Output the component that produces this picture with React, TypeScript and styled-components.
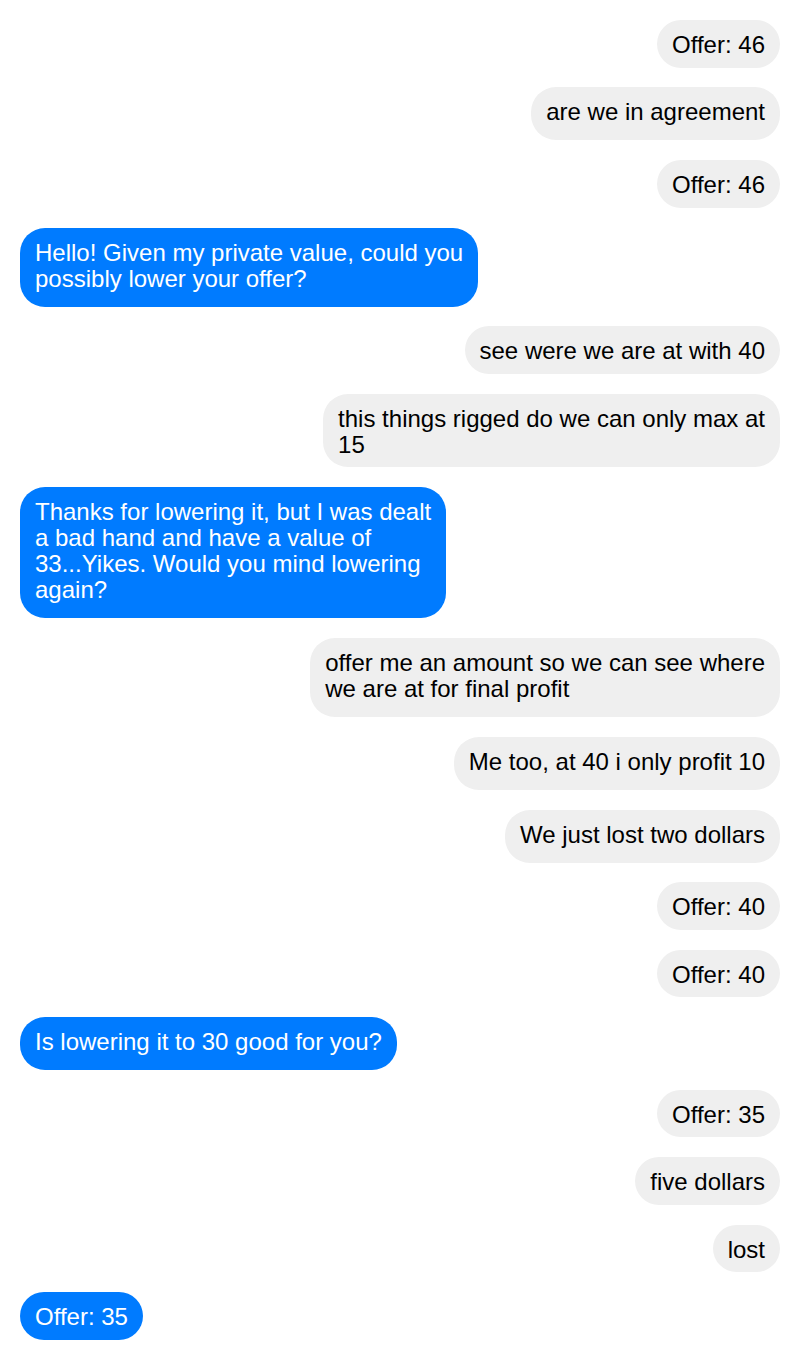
import React from "react";
import styled, { createGlobalStyle } from "styled-components";

const GlobalStyle = createGlobalStyle`
  html, body {
    margin: 0;
    padding: 0;
    background: #ffffff;
  }
  body {
    font-family: "Liberation Sans", Arial, sans-serif;
  }
`;

type Side = "left" | "right";

interface Message {
  side: Side;
  lines: string[];
}

const messages: Message[] = [
  { side: "right", lines: ["Offer: 46"] },
  { side: "right", lines: ["are we in agreement"] },
  { side: "right", lines: ["Offer: 46"] },
  {
    side: "left",
    lines: ["Hello! Given my private value, could you", "possibly lower your offer?"],
  },
  { side: "right", lines: ["see were we are at with 40"] },
  { side: "right", lines: ["this things rigged do we can only max at", "15"] },
  {
    side: "left",
    lines: [
      "Thanks for lowering it, but I was dealt",
      "a bad hand and have a value of",
      "33...Yikes. Would you mind lowering",
      "again?",
    ],
  },
  {
    side: "right",
    lines: ["offer me an amount so we can see where", "we are at for final profit"],
  },
  { side: "right", lines: ["Me too, at 40 i only profit 10"] },
  { side: "right", lines: ["We just lost two dollars"] },
  { side: "right", lines: ["Offer: 40"] },
  { side: "right", lines: ["Offer: 40"] },
  { side: "left", lines: ["Is lowering it to 30 good for you?"] },
  { side: "right", lines: ["Offer: 35"] },
  { side: "right", lines: ["five dollars"] },
  { side: "right", lines: ["lost"] },
  { side: "left", lines: ["Offer: 35"] },
];

const Thread = styled.div`
  display: flex;
  flex-direction: column;
  gap: 19.85px;
  padding: 20px;
`;

const Bubble = styled.div<{ $side: Side; $tail: boolean }>`
  align-self: ${(p) => (p.$side === "right" ? "flex-end" : "flex-start")};
  background: ${(p) => (p.$side === "right" ? "#efefef" : "#007bff")};
  color: ${(p) => (p.$side === "right" ? "#000000" : "#ffffff")};
  border-radius: 25px;
  padding: 12px 15px ${(p) => (p.$tail ? "15px" : "9.5px")};
  font-size: 24px;
  line-height: 26px;
`;

const Line = styled.div`
  white-space: nowrap;
`;

// bubbles whose last line has a descender sit a little taller
const hasTail = (text: string) => /[gjpqy,]/.test(text);

export default function App() {
  return (
    <>
      <GlobalStyle />
      <Thread>
        {messages.map((m, i) => (
          <Bubble
            key={i}
            $side={m.side}
            $tail={hasTail(m.lines[m.lines.length - 1])}
          >
            {m.lines.map((l, j) => (
              <Line key={j}>{l}</Line>
            ))}
          </Bubble>
        ))}
      </Thread>
    </>
  );
}
